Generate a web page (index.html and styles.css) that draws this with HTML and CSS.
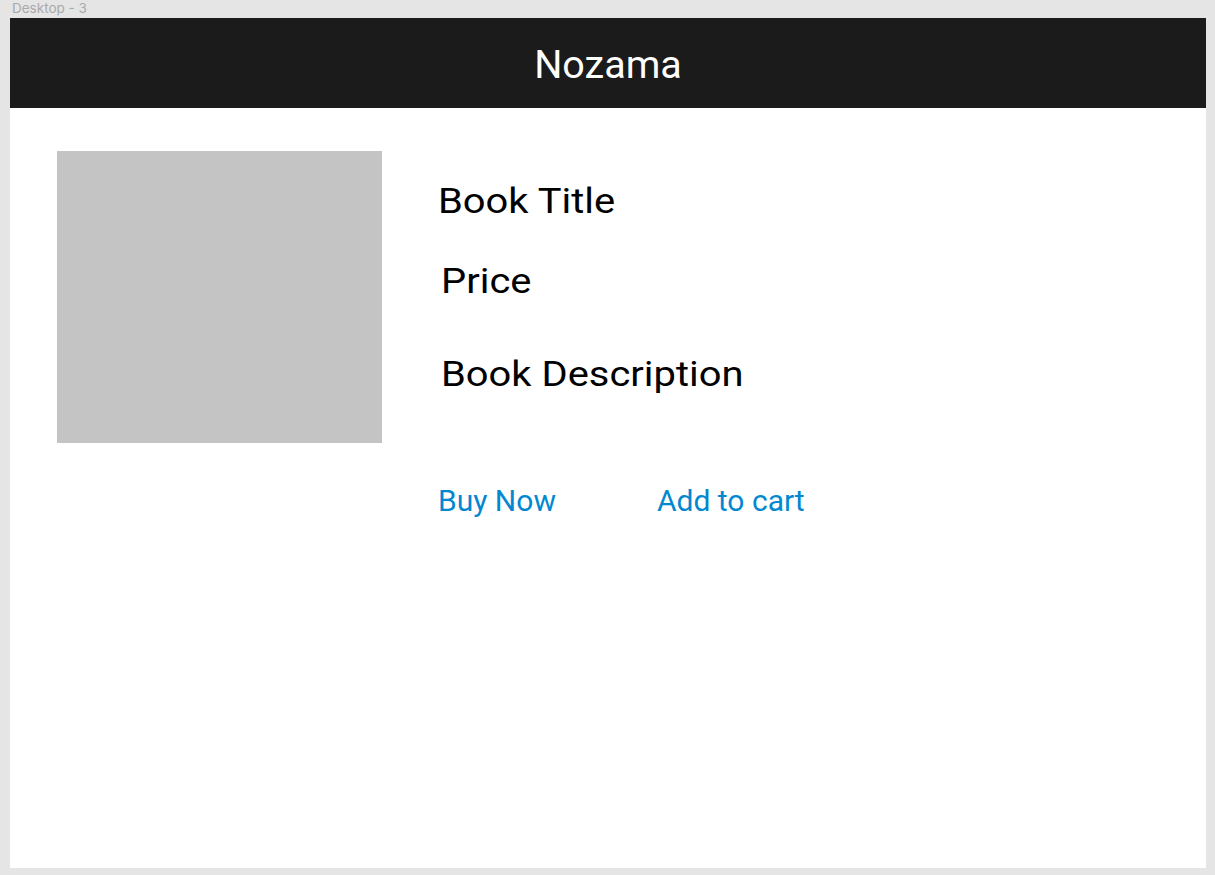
FILE: index.html
```html
<!DOCTYPE html>
<html lang="en">
<head>
<meta charset="utf-8">
<title>Nozama</title>
<link rel="stylesheet" href="styles.css">
</head>
<body>
<div class="label">Desktop - 3</div>
<div class="frame">
  <header class="topbar">Nozama</header>
  <main class="main">
    <div class="cover"></div>
    <section class="info">
      <h1 class="title big">Book Title</h1>
      <div class="price big">Price</div>
      <div class="desc big">Book Description</div>
      <div class="actions">
        <a class="btn btn-buy" href="#">Buy Now</a>
        <a class="btn btn-cart" href="#">Add to cart</a>
      </div>
    </section>
  </main>
</div>
</body>
</html>
```

FILE: styles.css
```css
html, body {
  margin: 0;
  padding: 0;
}
body {
  background: #e5e5e5;
  font-family: Roboto, "Liberation Sans", sans-serif;
  width: 1215px;
  height: 875px;
  overflow: hidden;
}
.label {
  height: 18px;
  padding-left: 12px;
  font-family: Inter, Roboto, sans-serif;
  font-size: 13.5px;
  line-height: 17px;
  color: #aaaaaa;
}
.frame {
  margin-left: 10px;
  width: 1196px;
  height: 850px;
  background: #ffffff;
}
.topbar {
  box-sizing: border-box;
  height: 90px;
  padding-top: 3px;
  background: #1b1b1b;
  color: #ffffff;
  font-size: 39.5px;
  line-height: 87px;
  text-align: center;
}
.main {
  display: flex;
  gap: 56px;
  padding: 43px 0 0 47px;
}
.cover {
  width: 325px;
  height: 292px;
  background: #c4c4c4;
  flex: none;
}
.info {
  padding-top: 30px;
  display: flex;
  flex-direction: column;
  align-items: flex-start;
  color: #000000;
}
.big {
  margin: 0;
  font-size: 35px;
  font-weight: 400;
  line-height: 41px;
  transform: scaleX(1.14);
  transform-origin: left center;
}
.price {
  margin: 39px 0 0 3px;
}
.desc {
  margin: 52px 0 0 3px;
}
.actions {
  margin-top: 88px;
  display: flex;
}
.btn {
  font-size: 30px;
  line-height: 35px;
  color: #0288d1;
  text-decoration: none;
}
.btn-buy {
  width: 219px;
}
```
